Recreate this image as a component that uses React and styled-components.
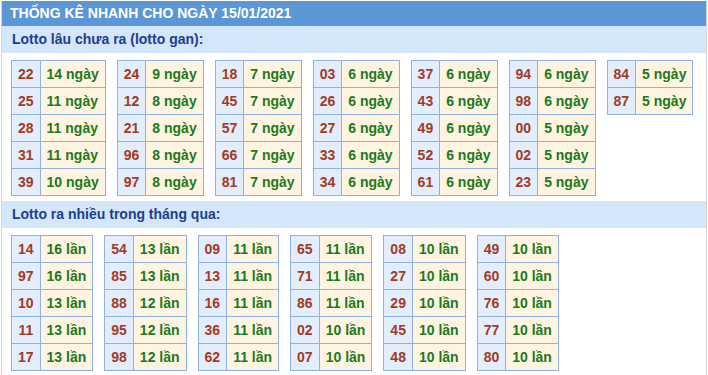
import styled, { createGlobalStyle } from "styled-components";

const GAN = [
  [["22", 14], ["25", 11], ["28", 11], ["31", 11], ["39", 10]],
  [["24", 9], ["12", 8], ["21", 8], ["96", 8], ["97", 8]],
  [["18", 7], ["45", 7], ["57", 7], ["66", 7], ["81", 7]],
  [["03", 6], ["26", 6], ["27", 6], ["33", 6], ["34", 6]],
  [["37", 6], ["43", 6], ["49", 6], ["52", 6], ["61", 6]],
  [["94", 6], ["98", 6], ["00", 5], ["02", 5], ["23", 5]],
  [["84", 5], ["87", 5]],
];

const NHIEU = [
  [["14", 16], ["97", 16], ["10", 13], ["11", 13], ["17", 13]],
  [["54", 13], ["85", 13], ["88", 12], ["95", 12], ["98", 12]],
  [["09", 11], ["13", 11], ["16", 11], ["36", 11], ["62", 11]],
  [["65", 11], ["71", 11], ["86", 11], ["02", 10], ["07", 10]],
  [["08", 10], ["27", 10], ["29", 10], ["45", 10], ["48", 10]],
  [["49", 10], ["60", 10], ["76", 10], ["77", 10], ["80", 10]],
];

export default function App() {
  return (
    <>
      <GlobalStyle />
      <StBox>
        <StTitle>THỐNG KÊ NHANH CHO NGÀY 15/01/2021</StTitle>
        <StSubTitle>Lotto lâu chưa ra (lotto gan):</StSubTitle>
        <StTables>
          {GAN.map((rows, i) => (
            <LottoTable key={i} rows={rows} unit='ngày' />
          ))}
        </StTables>
        <StSubTitle $gap>Lotto ra nhiều trong tháng qua:</StSubTitle>
        <StTables>
          {NHIEU.map((rows, i) => (
            <LottoTable key={i} rows={rows} unit='lần' />
          ))}
        </StTables>
      </StBox>
    </>
  );
}

function LottoTable({ rows, unit }) {
  return (
    <StTable>
      <tbody>
        {rows.map(([num, count]) => (
          <tr key={num}>
            <StNum>{num}</StNum>
            <StCount>
              {count} {unit}
            </StCount>
          </tr>
        ))}
      </tbody>
    </StTable>
  );
}

const GlobalStyle = createGlobalStyle`
  body {
    margin: 0;
    background: #fff;
    font-family: "Liberation Sans", Arial, sans-serif;
  }
`;

const StBox = styled.div`
  width: 704px;
  margin-left: 1px;
  height: 375px;
  border-left: 1px solid #d4d9e0;
  border-right: 1px solid #d4d9e0;
  overflow: hidden;
`;

const StTitle = styled.div`
  margin-top: 1px;
  height: 25px;
  line-height: 25px;
  padding-left: 8px;
  background-color: #5b96d6;
  color: #fff;
  font-size: 14px;
  font-weight: bold;
`;

const StSubTitle = styled.div`
  margin-top: ${(p) => (p.$gap ? "5px" : "0")};
  height: 27px;
  line-height: 27px;
  padding-left: 10px;
  background-color: #d3e6fa;
  color: #1d3e8c;
  font-size: 14px;
  font-weight: bold;
`;

const StTables = styled.div`
  display: flex;
  align-items: flex-start;
  gap: 11px;
  padding: 7px 0 0 9px;
`;

const StTable = styled.table`
  border-collapse: collapse;
  font-size: 14px;
  font-weight: bold;

  td {
    border: 1px solid #8fb0e2;
    height: 27px;
    padding: 0 6px;
    white-space: nowrap;
    box-sizing: border-box;
  }
`;

const StNum = styled.td`
  background-color: #e3eefc;
  color: #a23a24;
  text-align: center;
`;

const StCount = styled.td`
  background-color: #fff4e1;
  color: #1b7a1b;
`;
